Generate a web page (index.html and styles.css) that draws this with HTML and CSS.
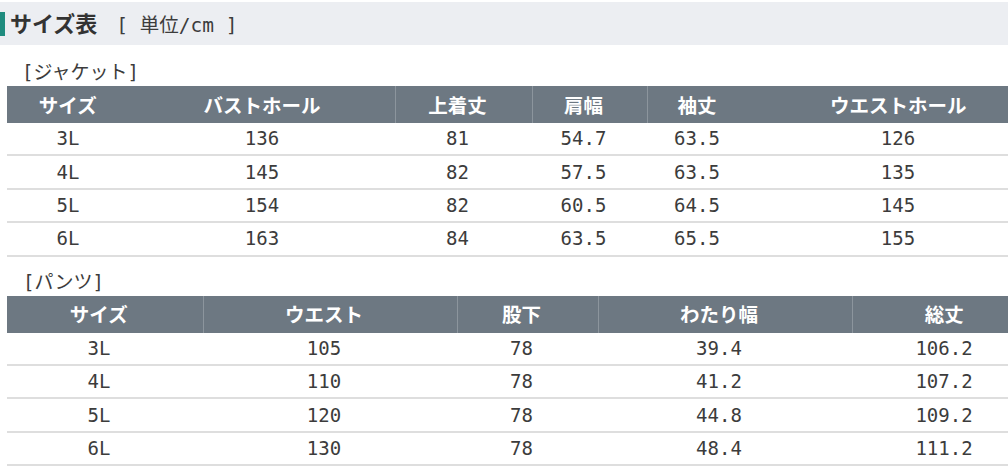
FILE: index.html
```html
<!DOCTYPE html>
<html lang="ja">
<head>
<meta charset="utf-8">
<title>サイズ表</title>
<link rel="stylesheet" href="styles.css">
</head>
<body>
<div class="title-bar">
  <span class="accent"></span>
  <h1 class="title">サイズ表</h1>
  <span class="unit">[ 単位/cm ]</span>
</div>

<div class="section">
  <div class="label">[ジャケット]</div>
  <table class="size-table jacket">
    <colgroup>
      <col class="j1"><col class="j2"><col class="j3"><col class="j4"><col class="j5"><col class="j6">
    </colgroup>
    <thead>
      <tr><th>サイズ</th><th class="nosep">バストホール</th><th>上着丈</th><th>肩幅</th><th>袖丈</th><th class="nosep">ウエストホール</th></tr>
    </thead>
    <tbody>
      <tr><td>3L</td><td>136</td><td>81</td><td>54.7</td><td>63.5</td><td>126</td></tr>
      <tr><td>4L</td><td>145</td><td>82</td><td>57.5</td><td>63.5</td><td>135</td></tr>
      <tr><td>5L</td><td>154</td><td>82</td><td>60.5</td><td>64.5</td><td>145</td></tr>
      <tr><td>6L</td><td>163</td><td>84</td><td>63.5</td><td>65.5</td><td>155</td></tr>
    </tbody>
  </table>

  <div class="label label-pants">[パンツ]</div>
  <table class="size-table pants">
    <colgroup>
      <col class="p1"><col class="p2"><col class="p3"><col class="p4"><col class="p5">
    </colgroup>
    <thead>
      <tr><th>サイズ</th><th>ウエスト</th><th>股下</th><th>わたり幅</th><th>総丈</th></tr>
    </thead>
    <tbody>
      <tr><td>3L</td><td>105</td><td>78</td><td>39.4</td><td>106.2</td></tr>
      <tr><td>4L</td><td>110</td><td>78</td><td>41.2</td><td>107.2</td></tr>
      <tr><td>5L</td><td>120</td><td>78</td><td>44.8</td><td>109.2</td></tr>
      <tr><td>6L</td><td>130</td><td>78</td><td>48.4</td><td>111.2</td></tr>
    </tbody>
  </table>
</div>
</body>
</html>
```

FILE: styles.css
```css
html, body {
  margin: 0;
  padding: 0;
  background: #ffffff;
}
body {
  width: 1008px;
  height: 473px;
  overflow: hidden;
  font-family: "Noto Sans CJK JP", "Noto Sans", sans-serif;
  color: #3c3c3c;
}

.title-bar {
  margin-top: 2px;
  height: 43px;
  background: #eceef2;
  display: flex;
  align-items: center;
}
.accent {
  width: 5px;
  height: 24px;
  background: #1f8c7f;
  margin-right: 5px;
  margin-top: 1px;
}
.title {
  margin: 0;
  font-size: 22px;
  font-weight: 700;
  color: #333333;
  line-height: 1;
  margin-top: -4px;
}
.unit {
  margin-left: 19px;
  font-family: "DejaVu Sans Mono", "Noto Sans CJK JP", monospace;
  font-size: 19.5px;
  color: #3c3c3c;
  white-space: pre;
}

.section {
  padding-left: 7px;
}
.label {
  margin: 15px 0 2px 15px;
  height: 24px;
  line-height: 24px;
  font-family: "DejaVu Sans Mono", "Noto Sans CJK JP", monospace;
  font-size: 19px;
  font-weight: 400;
  color: #3c3c3c;
}
.label-pants {
  margin-top: 13px;
  margin-left: 16px;
}

.size-table {
  border-collapse: collapse;
  table-layout: fixed;
}
.jacket { width: 1042px; }
.pants { width: 1041px; }

.j1 { width: 134px; }
.j2 { width: 254px; }
.j3 { width: 137px; }
.j4 { width: 115px; }
.j5 { width: 112px; }
.j6 { width: 290px; }

.p1 { width: 196px; }
.p2 { width: 254px; }
.p3 { width: 141px; }
.p4 { width: 254px; }
.p5 { width: 196px; }

.size-table th {
  height: 37px;
  padding: 0 12px 0 0;
  background: #6d7882;
  color: #ffffff;
  font-size: 19.5px;
  font-weight: 700;
  text-align: center;
  border-left: 1px solid #8c959d;
  line-height: 1;
}
.size-table th:first-child { border-left: none; }
.size-table th.nosep { border-left-color: #6d7882; }

.size-table td {
  height: 31.4px;
  padding: 0 12px 0 0;
  border-bottom: 2px solid #dedede;
  text-align: center;
  font-family: "DejaVu Sans Mono", "Liberation Mono", monospace;
  font-size: 19px;
  color: #3c3c3c;
  line-height: 1;
}
```
